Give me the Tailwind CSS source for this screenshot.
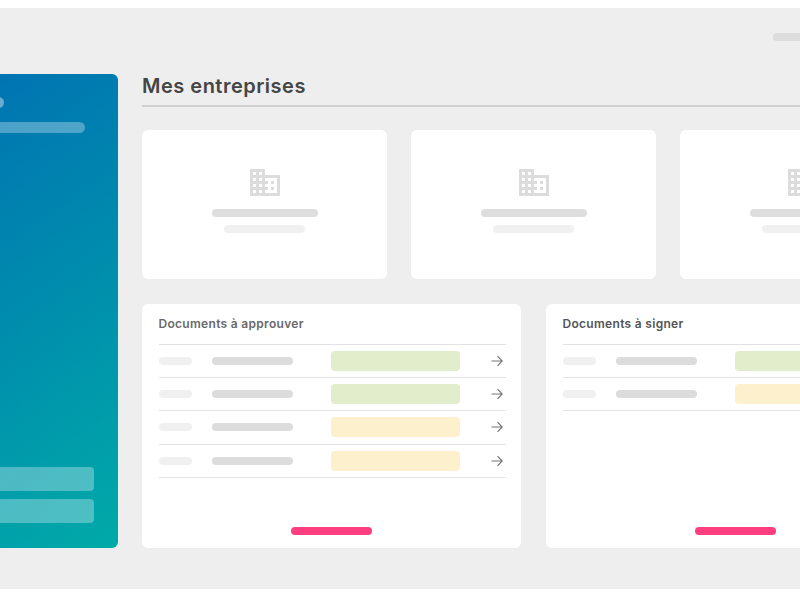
<!DOCTYPE html>
<html lang="fr">
<head>
<meta charset="utf-8">
<script src="https://cdn.jsdelivr.net/npm/@tailwindcss/browser@4"></script>
<title>Mes entreprises</title>
</head>
<body class="m-0 bg-white">
<div class="w-[800px] h-[600px] overflow-hidden bg-white pt-2 font-['Inter','Liberation_Sans',sans-serif]">
  <div class="w-[800px] h-[580.5px] overflow-hidden bg-[#eeeeee]">
    <header class="h-[65.5px] pt-[25px] pl-[773px]">
      <div class="w-[60px] h-2 rounded-full bg-[#dcdcdc]"></div>
    </header>
    <div class="flex">
      <aside class="flex flex-col shrink-0 w-[117.5px] h-[474.5px] rounded-r-md bg-linear-[145deg] from-[#0074b2] to-[#00aaa8] pt-[23.5px] pb-[25px]">
        <div class="w-[11px] h-[11px] -ml-[7.5px] rounded-full bg-white/40"></div>
        <div class="w-[85px] h-[10.5px] mt-[14px] rounded-r-full bg-white/30"></div>
        <div class="mt-auto w-[93.5px] h-[24.5px] rounded-r bg-white/30"></div>
        <div class="mt-2 w-[93.5px] h-6 rounded-r bg-white/30"></div>
      </aside>
      <main class="shrink-0 ml-[24.5px] w-[783px]">
        <div class="h-[33px] w-[658px] border-b-2 border-[#cfcfcf]">
          <h1 class="text-[20px] leading-[24px] font-semibold tracking-[0.5px] text-[#454545]">Mes entreprises</h1>
        </div>
        <div class="flex gap-6 mt-[23px]">
          <section class="flex flex-col items-center w-[245px] h-[149px] rounded-md bg-white pt-[39px]">
            <svg class="w-[30px] h-[27px]" viewBox="2 3 20 18" fill="#dcdcdc"><path d="M12 7V3H2v18h20V7H12zM6 19H4v-2h2v2zm0-4H4v-2h2v2zm0-4H4V9h2v2zm0-4H4V5h2v2zm4 12H8v-2h2v2zm0-4H8v-2h2v2zm0-4H8V9h2v2zm0-4H8V5h2v2zm10 12h-8v-2h2v-2h-2v-2h2v-2h-2V9h8v10zm-2-8h-2v2h2v-2zm0 4h-2v2h2v-2z"/></svg>
            <div class="w-[106px] h-2 mt-[13px] rounded-full bg-[#dedede]"></div>
            <div class="w-[81px] h-2 mt-2 rounded-full bg-[#f0f0f0]"></div>
          </section>
          <section class="flex flex-col items-center w-[245px] h-[149px] rounded-md bg-white pt-[39px]">
            <svg class="w-[30px] h-[27px]" viewBox="2 3 20 18" fill="#dcdcdc"><path d="M12 7V3H2v18h20V7H12zM6 19H4v-2h2v2zm0-4H4v-2h2v2zm0-4H4V9h2v2zm0-4H4V5h2v2zm4 12H8v-2h2v2zm0-4H8v-2h2v2zm0-4H8V9h2v2zm0-4H8V5h2v2zm10 12h-8v-2h2v-2h-2v-2h2v-2h-2V9h8v10zm-2-8h-2v2h2v-2zm0 4h-2v2h2v-2z"/></svg>
            <div class="w-[106px] h-2 mt-[13px] rounded-full bg-[#dedede]"></div>
            <div class="w-[81px] h-2 mt-2 rounded-full bg-[#f0f0f0]"></div>
          </section>
          <section class="flex flex-col items-center w-[245px] h-[149px] rounded-md bg-white pt-[39px]">
            <svg class="w-[30px] h-[27px]" viewBox="2 3 20 18" fill="#dcdcdc"><path d="M12 7V3H2v18h20V7H12zM6 19H4v-2h2v2zm0-4H4v-2h2v2zm0-4H4V9h2v2zm0-4H4V5h2v2zm4 12H8v-2h2v2zm0-4H8v-2h2v2zm0-4H8V9h2v2zm0-4H8V5h2v2zm10 12h-8v-2h2v-2h-2v-2h2v-2h-2V9h8v10zm-2-8h-2v2h2v-2zm0 4h-2v2h2v-2z"/></svg>
            <div class="w-[106px] h-2 mt-[13px] rounded-full bg-[#dedede]"></div>
            <div class="w-[81px] h-2 mt-2 rounded-full bg-[#f0f0f0]"></div>
          </section>
        </div>
        <div class="flex gap-[25px] mt-[25px]">
          <section class="flex flex-col w-[379px] h-[244px] rounded-md bg-white pl-[16.5px] pr-4 pt-[13px] pb-[13px]">
            <h2 class="h-[27px] text-[12px] leading-[14px] font-semibold tracking-[0.3px] text-[#6a6a6a]">Documents à approuver</h2>
            <div class="w-[347px] border-t border-[#e2e2e2]">
              <div class="flex items-center h-[33.4px] border-b border-[#e2e2e2]">
                <div class="w-[33px] h-2 rounded-full bg-[#f0f0f0]"></div>
                <div class="w-[81px] h-2 ml-5 rounded-full bg-[#dcdcdc]"></div>
                <div class="w-[129px] h-5 ml-[38px] rounded-sm bg-[#e2edcb]"></div>
                <svg class="w-3 h-3 ml-[31px]" viewBox="0 0 12 12" fill="none" stroke="#777777" stroke-width="1.2"><path d="M0.5 6H11M6.5 1.2 11.2 6 6.5 10.8"/></svg>
              </div>
              <div class="flex items-center h-[33.4px] border-b border-[#e2e2e2]">
                <div class="w-[33px] h-2 rounded-full bg-[#f0f0f0]"></div>
                <div class="w-[81px] h-2 ml-5 rounded-full bg-[#dcdcdc]"></div>
                <div class="w-[129px] h-5 ml-[38px] rounded-sm bg-[#e2edcb]"></div>
                <svg class="w-3 h-3 ml-[31px]" viewBox="0 0 12 12" fill="none" stroke="#777777" stroke-width="1.2"><path d="M0.5 6H11M6.5 1.2 11.2 6 6.5 10.8"/></svg>
              </div>
              <div class="flex items-center h-[33.4px] border-b border-[#e2e2e2]">
                <div class="w-[33px] h-2 rounded-full bg-[#f0f0f0]"></div>
                <div class="w-[81px] h-2 ml-5 rounded-full bg-[#dcdcdc]"></div>
                <div class="w-[129px] h-5 ml-[38px] rounded-sm bg-[#fdf1cd]"></div>
                <svg class="w-3 h-3 ml-[31px]" viewBox="0 0 12 12" fill="none" stroke="#777777" stroke-width="1.2"><path d="M0.5 6H11M6.5 1.2 11.2 6 6.5 10.8"/></svg>
              </div>
              <div class="flex items-center h-[33.4px] border-b border-[#e2e2e2]">
                <div class="w-[33px] h-2 rounded-full bg-[#f0f0f0]"></div>
                <div class="w-[81px] h-2 ml-5 rounded-full bg-[#dcdcdc]"></div>
                <div class="w-[129px] h-5 ml-[38px] rounded-sm bg-[#fdf1cd]"></div>
                <svg class="w-3 h-3 ml-[31px]" viewBox="0 0 12 12" fill="none" stroke="#777777" stroke-width="1.2"><path d="M0.5 6H11M6.5 1.2 11.2 6 6.5 10.8"/></svg>
              </div>
            </div>
            <div class="self-center mt-auto w-[81px] h-2 rounded-full bg-[#ff3d7f]"></div>
          </section>
          <section class="flex flex-col w-[379px] h-[244px] rounded-md bg-white pl-[16.5px] pr-4 pt-[13px] pb-[13px]">
            <h2 class="h-[27px] text-[12px] leading-[14px] font-semibold tracking-[0.3px] text-[#555555]">Documents à signer</h2>
            <div class="w-[347px] border-t border-[#e2e2e2]">
              <div class="flex items-center h-[33.4px] border-b border-[#e2e2e2]">
                <div class="w-[33px] h-2 rounded-full bg-[#f0f0f0]"></div>
                <div class="w-[81px] h-2 ml-5 rounded-full bg-[#dcdcdc]"></div>
                <div class="w-[129px] h-5 ml-[38px] rounded-sm bg-[#e2edcb]"></div>
              </div>
              <div class="flex items-center h-[33.4px] border-b border-[#e2e2e2]">
                <div class="w-[33px] h-2 rounded-full bg-[#f0f0f0]"></div>
                <div class="w-[81px] h-2 ml-5 rounded-full bg-[#dcdcdc]"></div>
                <div class="w-[129px] h-5 ml-[38px] rounded-sm bg-[#fdf1cd]"></div>
              </div>
            </div>
            <div class="self-center mt-auto w-[81px] h-2 rounded-full bg-[#ff3d7f]"></div>
          </section>
        </div>
      </main>
    </div>
  </div>
</div>
</body>
</html>
